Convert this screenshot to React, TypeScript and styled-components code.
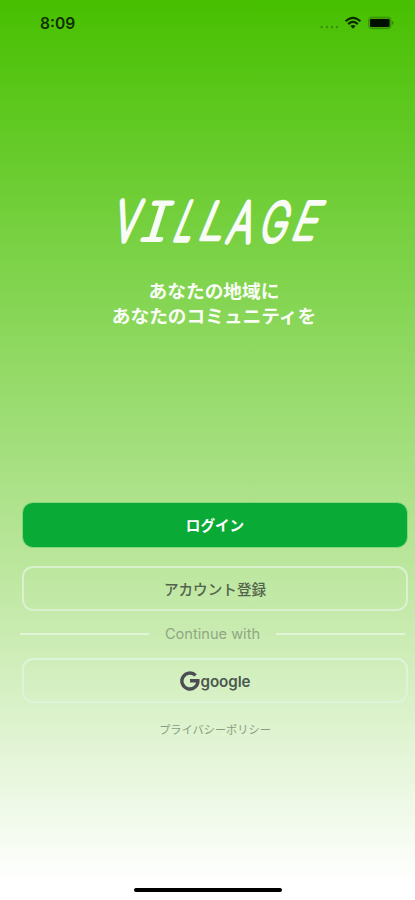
import React from 'react';
import styled, { createGlobalStyle } from 'styled-components';

const GlobalStyle = createGlobalStyle`
  * { box-sizing: border-box; }
  body { margin: 0; }
`;

const Screen = styled.main`
  width: 415px;
  height: 900px;
  overflow: hidden;
  display: flex;
  flex-direction: column;
  background: linear-gradient(180deg, #47c000 0%, #84d552 33%, #c3e9a8 67%, #ffffff 98%);
  font-family: Inter, 'Noto Sans CJK JP', sans-serif;
`;

const StatusBar = styled.header`
  height: 46px;
  padding: 0 20px 0 40px;
  display: flex;
  align-items: center;
  justify-content: space-between;
`;

const Clock = styled.time`
  font-size: 15.6px;
  font-weight: 600;
  color: #103000;
`;

const Brand = styled.section`
  height: 456px;
  padding: 144px 0 0 100px;
`;

const Wordmark = styled.svg`
  display: block;
  width: 240px;
  height: 70px;
  overflow: visible;
  font-family: Inter, sans-serif;
  font-size: 56px;
  font-weight: 100;
  fill: #f9fbf7;
  stroke: #f9fbf7;
  stroke-linejoin: round;
`;

const Letter = styled.text`
  font-feature-settings: 'cv08';
`;

const Tagline = styled.p`
  width: 228px;
  margin: 17px 0 0;
  font-family: 'Noto Sans CJK JP', sans-serif;
  font-size: 18.7px;
  font-weight: 700;
  line-height: 25px;
  text-align: center;
  white-space: nowrap;
  color: #f9fdf5;
`;

const Actions = styled.section`
  padding: 0 7px 0 22px;
  display: flex;
  flex-direction: column;
`;

const buttonBorder = {
  solid: '1px solid #86d77a',
  outline: '2px solid #daf1cf',
  faint: '2px solid #dcf4d8',
};

const Button = styled.button<{ $variant: 'solid' | 'outline' | 'faint' }>`
  height: ${(p) => (p.$variant === 'solid' ? 46 : 45)}px;
  margin-top: ${(p) => (p.$variant === 'outline' ? 18 : 0)}px;
  padding: 0 0 ${(p) => (p.$variant === 'solid' ? 2 : 0)}px;
  display: flex;
  align-items: center;
  justify-content: center;
  border-radius: 11px;
  border: ${(p) => buttonBorder[p.$variant]};
  background: ${(p) => (p.$variant === 'solid' ? '#09ab36' : 'transparent')};
  color: ${(p) => (p.$variant === 'solid' ? '#ffffff' : '#53644c')};
  font-family: Inter, 'Noto Sans CJK JP', sans-serif;
  font-size: 14.6px;
  font-weight: ${(p) => (p.$variant === 'solid' ? 700 : 500)};
`;

const Divider = styled.div`
  height: 47px;
  margin: 0 -4px 0 -2px;
  padding: 0 7px 1px 0;
  display: flex;
  align-items: center;
  justify-content: space-between;
  color: #8fa783;
  font-size: 14.6px;
  line-height: 18px;
`;

const Rule = styled.span`
  width: 129px;
  height: 2px;
  background: #e2f5d7;
`;

const GoogleLabel = styled.span`
  margin-left: 1px;
  padding-top: 2px;
  font-size: 15.2px;
  font-weight: 600;
  letter-spacing: -0.1px;
  color: #4b574d;
`;

const PolicyLink = styled.a`
  margin-top: 17px;
  text-align: center;
  font-family: 'Noto Sans CJK JP', sans-serif;
  font-size: 11.2px;
  line-height: 18px;
  color: #8a9c82;
`;

const HomeIndicator = styled.div`
  width: 148px;
  height: 4px;
  margin: auto 0 8px 134px;
  border-radius: 2px;
  background: #000;
`;

const letters = [
  { char: 'V', x: 12, y: 51, width: 0.68, height: 0.98, slant: -0.21, stroke: 5.6 },
  { char: 'I', x: 39, y: 50, width: 1.2, height: 0.92, slant: -0.29, stroke: 4.2 },
  { char: 'L', x: 71.5, y: 49.5, width: 0.58, height: 0.94, slant: -0.38, stroke: 6 },
  { char: 'L', x: 96.5, y: 49, width: 0.78, height: 0.9, slant: -0.37, stroke: 5.2 },
  { char: 'A', x: 125.5, y: 51.5, width: 0.68, height: 0.98, slant: -0.26, stroke: 5.4 },
  { char: 'G', x: 158, y: 50.5, width: 0.65, height: 0.94, slant: -0.26, stroke: 5.4 },
  { char: 'E', x: 189.5, y: 49, width: 0.74, height: 0.9, slant: -0.35, stroke: 5 },
];

function StatusIcons() {
  return (
    <svg width="76" height="18" viewBox="319 14 76 18">
      <g fill="#369208">
        <circle cx="321.7" cy="27" r="1.2" />
        <circle cx="327" cy="27" r="1.2" />
        <circle cx="332" cy="27" r="1.2" />
        <circle cx="337" cy="27" r="1.2" />
      </g>
      <g fill="none" stroke="#0b2a00" strokeWidth="2.1">
        <path d="M345.6 21.3Q353 14.4 360.4 21.3" />
        <path d="M348.2 24.1Q353 19.8 357.8 24.1" />
      </g>
      <path d="M350.4 26Q353 24 355.6 26L353 28.8Z" fill="#0b2a00" />
      <rect x="368.6" y="17.2" width="22.4" height="11.4" rx="3" fill="#43a900" stroke="#339005" strokeWidth="1" />
      <rect x="370" y="19" width="19.6" height="8" rx="1.2" fill="#001000" />
      <path d="M392.3 20.8Q394.7 22.9 392.3 25Z" fill="#23700a" />
    </svg>
  );
}

function GoogleMark() {
  return (
    <svg width="20" height="22" viewBox="0 0 20 22" fill="none" stroke="#4b4d53" strokeWidth="3.4">
      <path d="M15.6 5.4A8 8 0 1 0 17.9 10.8H10" />
    </svg>
  );
}

export default function App() {
  return (
    <Screen>
      <GlobalStyle />
      <StatusBar>
        <Clock>8:09</Clock>
        <StatusIcons />
      </StatusBar>
      <Brand>
        <Wordmark viewBox="0 0 240 70" role="img" aria-label="VILLAGE">
          {letters.map((l, i) => (
            <Letter
              key={i}
              strokeWidth={l.stroke}
              transform={`matrix(${l.width} 0 ${l.slant} ${l.height} ${l.x} ${l.y})`}
            >
              {l.char}
            </Letter>
          ))}
        </Wordmark>
        <Tagline>
          あなたの地域に
          <br />
          あなたのコミュニティを
        </Tagline>
      </Brand>
      <Actions>
        <Button $variant="solid">ログイン</Button>
        <Button $variant="outline">アカウント登録</Button>
        <Divider>
          <Rule />
          Continue with
          <Rule />
        </Divider>
        <Button $variant="faint">
          <GoogleMark />
          <GoogleLabel>google</GoogleLabel>
        </Button>
        <PolicyLink>プライバシーポリシー</PolicyLink>
      </Actions>
      <HomeIndicator />
    </Screen>
  );
}
